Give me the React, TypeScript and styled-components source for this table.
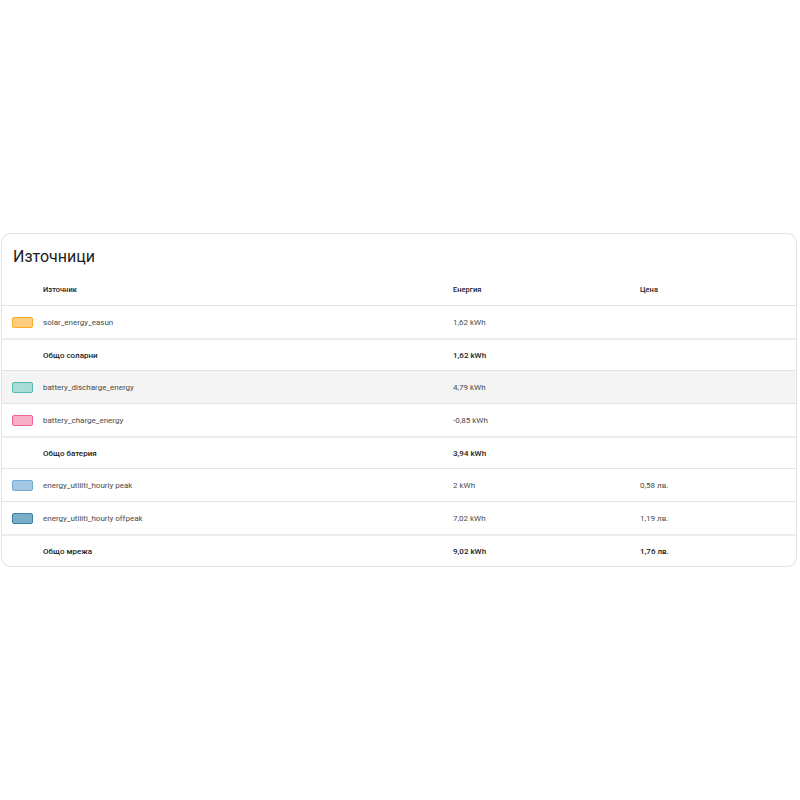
import React from "react";
import styled, { createGlobalStyle } from "styled-components";

const Global = createGlobalStyle`
  html, body { margin: 0; padding: 0; background: #ffffff; }
  body { font-family: Roboto, "Noto Sans", "Liberation Sans", sans-serif; color: #212121; }
`;

const Page = styled.div`
  padding: 233px 3px 0 1px;
`;

const Card = styled.div`
  border: 1px solid #e3e3e3;
  border-radius: 10px;
  background: #fff;
  overflow: hidden;
  box-shadow: 0 0 1px rgba(0,0,0,0.04);
`;

const Title = styled.h2`
  margin: 0;
  font-size: 16px;
  font-weight: 400;
  line-height: 20px;
  padding: 13px 11px 0;
  color: #212121;
`;

const Table = styled.div`
  display: grid;
  grid-template-columns: 41px 410px 187px 1fr;
`;

type RowProps = { $head?: boolean; $total?: boolean; $hover?: boolean; $h: number };

const Row = styled.div<RowProps>`
  display: contents;
  & > div {
    height: ${(p) => p.$h}px;
    padding-top: ${(p) => (p.$head ? "7px" : "0")};
    background: ${(p) => (p.$hover ? "#f4f4f4" : "transparent")};
    border-top: ${(p) => (p.$head ? "none" : p.$total ? "2px solid #ececec" : "1px solid #e3e3e3")};
    font-weight: ${(p) => (p.$head || p.$total ? 500 : 400)};
    color: ${(p) => (p.$head || p.$total ? "#212121" : "#4a4a4a")};
    font-size: ${(p) => (p.$head ? "7.5px" : "8px")};
    box-sizing: border-box;
  }
`;

const Cell = styled.div`
  display: flex;
  align-items: center;
  white-space: nowrap;
`;

const SwatchCell = styled(Cell)`
  padding-left: 10px;
`;

const Swatch = styled.span<{ $fill: string; $border: string }>`
  display: block;
  width: 21px;
  height: 11px;
  box-sizing: border-box;
  border-radius: 2px;
  background: ${(p) => p.$fill};
  border: 1px solid ${(p) => p.$border};
`;

type Item = {
  name: string;
  energy: string;
  price?: string;
  total?: boolean;
  hover?: boolean;
  swatch?: [string, string];
  h: number;
};

const items: Item[] = [
  { name: "solar_energy_easun", energy: "1,62 kWh", swatch: ["#ffcc80", "#ffa726"], h: 33 },
  { name: "Общо соларни", energy: "1,62 kWh", total: true, h: 32 },
  { name: "battery_discharge_energy", energy: "4,79 kWh", swatch: ["#a8dcd4", "#56bbae"], hover: true, h: 33 },
  { name: "battery_charge_energy", energy: "-0,85 kWh", swatch: ["#f8b0c8", "#f06292"], h: 33 },
  { name: "Общо батерия", energy: "3,94 kWh", total: true, h: 32 },
  { name: "energy_utiliti_hourly peak", energy: "2 kWh", price: "0,58 лв.", swatch: ["#a4c7e4", "#73a9d4"], h: 33 },
  { name: "energy_utiliti_hourly offpeak", energy: "7,02 kWh", price: "1,19 лв.", swatch: ["#7aaec8", "#3a81a3"], h: 33 },
  { name: "Общо мрежа", energy: "9,02 kWh", price: "1,76 лв.", total: true, h: 32 },
];

export default function App() {
  return (
    <>
      <Global />
      <Page>
        <Card>
          <Title>Източници</Title>
          <Table>
            <Row $head $h={38}>
              <Cell />
              <Cell>Източник</Cell>
              <Cell>Енергия</Cell>
              <Cell>Цена</Cell>
            </Row>
            {items.map((it) => (
              <Row key={it.name} $total={it.total} $hover={it.hover} $h={it.h}>
                <SwatchCell>{it.swatch && <Swatch $fill={it.swatch[0]} $border={it.swatch[1]} />}</SwatchCell>
                <Cell>{it.name}</Cell>
                <Cell>{it.energy}</Cell>
                <Cell>{it.price ?? ""}</Cell>
              </Row>
            ))}
          </Table>
        </Card>
      </Page>
    </>
  );
}
